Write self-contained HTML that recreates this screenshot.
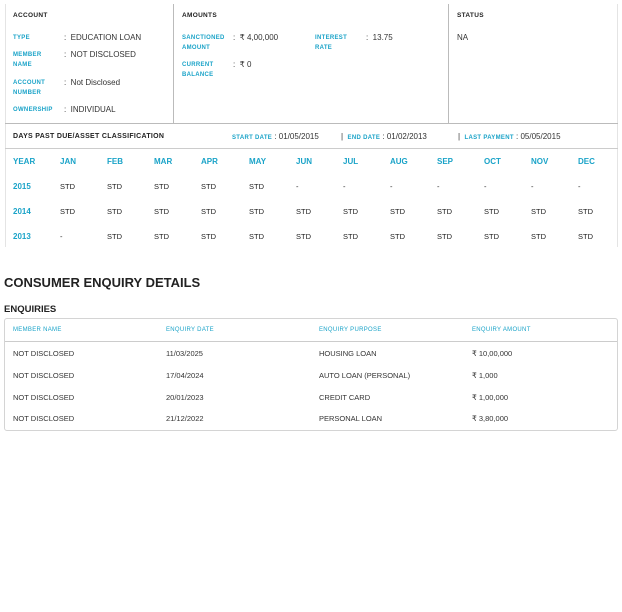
<!DOCTYPE html>
<html><head><meta charset="utf-8"><style>
body{margin:0;width:622px;height:612px;background:#fff;position:relative;font-family:"Liberation Sans",sans-serif;color:#222;overflow:hidden}
.a{position:absolute;white-space:nowrap;line-height:1}
.l{position:absolute;background:#bbb}
.h{font-size:6.5px;font-weight:bold;letter-spacing:0.3px;color:#222}
.c{font-size:6px;font-weight:bold;color:#1aa3c8;letter-spacing:0.3px;line-height:10px}
.v{font-size:8px;color:#333}
.m{font-size:8px;font-weight:bold;color:#1aa3c8}
.s{font-size:7.5px;color:#222}
.y{font-size:8px;font-weight:bold;color:#1aa3c8}
</style></head><body>
<div class="l" style="left:5px;top:4px;width:1px;height:243px;background:#e4e4e4"></div>
<div class="l" style="left:617px;top:4px;width:1px;height:243px;background:#e4e4e4"></div>
<div class="l" style="left:173px;top:4px;width:1px;height:119px"></div>
<div class="l" style="left:448px;top:4px;width:1px;height:119px"></div>
<div class="l" style="left:5px;top:123px;width:613px;height:1px"></div>
<div class="l" style="left:5px;top:148px;width:613px;height:1px;background:#ccc"></div>

<div class="a h" style="left:13px;top:13px">ACCOUNT</div>
<div class="a h" style="left:182px;top:13px">AMOUNTS</div>
<div class="a h" style="left:457px;top:13px">STATUS</div>

<div class="a c" style="left:13px;top:33px">TYPE</div>
<div class="a v" style="left:64px;top:34px">:&nbsp; EDUCATION LOAN</div>
<div class="a c" style="left:13px;top:50px">MEMBER<br>NAME</div>
<div class="a v" style="left:64px;top:51px">:&nbsp; NOT DISCLOSED</div>
<div class="a c" style="left:13px;top:78px">ACCOUNT<br>NUMBER</div>
<div class="a v" style="left:64px;top:79px">:&nbsp; Not Disclosed</div>
<div class="a c" style="left:13px;top:105px">OWNERSHIP</div>
<div class="a v" style="left:64px;top:106px">:&nbsp; INDIVIDUAL</div>

<div class="a c" style="left:182px;top:33px">SANCTIONED<br>AMOUNT</div>
<div class="a v" style="left:233px;top:34px">:&nbsp; ₹ 4,00,000</div>
<div class="a c" style="left:182px;top:60px">CURRENT<br>BALANCE</div>
<div class="a v" style="left:233px;top:61px">:&nbsp; ₹ 0</div>
<div class="a c" style="left:315px;top:33px">INTEREST<br>RATE</div>
<div class="a v" style="left:366px;top:34px">:&nbsp; 13.75</div>
<div class="a v" style="left:457px;top:34px">NA</div>

<div class="a h" style="left:13px;top:133px;font-size:7px">DAYS PAST DUE/ASSET CLASSIFICATION</div>
<div class="a v" style="left:232px;top:133px"><span class="c">START DATE</span> : 01/05/2015</div>
<div class="a v" style="left:341px;top:133px">| &nbsp;<span class="c">END DATE</span> : 01/02/2013</div>
<div class="a v" style="left:458px;top:133px">| &nbsp;<span class="c">LAST PAYMENT</span> : 05/05/2015</div>

<div id="grid"></div>
<script>
var xs=[13,60,107,154,201,249,296,343,390,437,484,531,578];
var hd=["YEAR","JAN","FEB","MAR","APR","MAY","JUN","JUL","AUG","SEP","OCT","NOV","DEC"];
var rows=[["2015","STD","STD","STD","STD","STD","-","-","-","-","-","-","-"],
["2014","STD","STD","STD","STD","STD","STD","STD","STD","STD","STD","STD","STD"],
["2013","-","STD","STD","STD","STD","STD","STD","STD","STD","STD","STD","STD"]];
var h="";
for(var i=0;i<13;i++)h+='<div class="a m" style="left:'+xs[i]+'px;top:158px">'+hd[i]+'</div>';
for(var r=0;r<3;r++)for(var i=0;i<13;i++)h+='<div class="a '+(i?'s':'y')+'" style="left:'+xs[i]+'px;top:'+(183+r*25)+'px">'+rows[r][i]+'</div>';
document.getElementById("grid").innerHTML=h;
</script>

<div class="a" style="left:4px;top:276px;font-size:13px;font-weight:bold;color:#222">CONSUMER ENQUIRY DETAILS</div>
<div class="a" style="left:4px;top:305px;font-size:9.5px;font-weight:bold;color:#222">ENQUIRIES</div>
<div style="position:absolute;left:4px;top:318px;width:612px;height:111px;border:1px solid #d4d4d4;border-radius:3px"></div>
<div class="l" style="left:5px;top:341px;width:612px;height:1px;background:#ccc"></div>
<div class="a c" style="left:13px;top:325px;font-weight:normal">MEMBER NAME</div>
<div class="a c" style="left:166px;top:325px;font-weight:normal">ENQUIRY DATE</div>
<div class="a c" style="left:319px;top:325px;font-weight:normal">ENQUIRY PURPOSE</div>
<div class="a c" style="left:472px;top:325px;font-weight:normal">ENQUIRY AMOUNT</div>
<div id="enq"></div>
<script>
var e=[["NOT DISCLOSED","11/03/2025","HOUSING LOAN","₹ 10,00,000"],["NOT DISCLOSED","17/04/2024","AUTO LOAN (PERSONAL)","₹ 1,000"],["NOT DISCLOSED","20/01/2023","CREDIT CARD","₹ 1,00,000"],["NOT DISCLOSED","21/12/2022","PERSONAL LOAN","₹ 3,80,000"]];
var ys=[350,372,394,415],cx=[13,166,319,472],g="";
for(var r=0;r<4;r++)for(var i=0;i<4;i++)g+='<div class="a v" style="font-size:7.5px;left:'+cx[i]+'px;top:'+ys[r]+'px">'+e[r][i]+'</div>';
document.getElementById("enq").innerHTML=g;
</script>
</body></html>
